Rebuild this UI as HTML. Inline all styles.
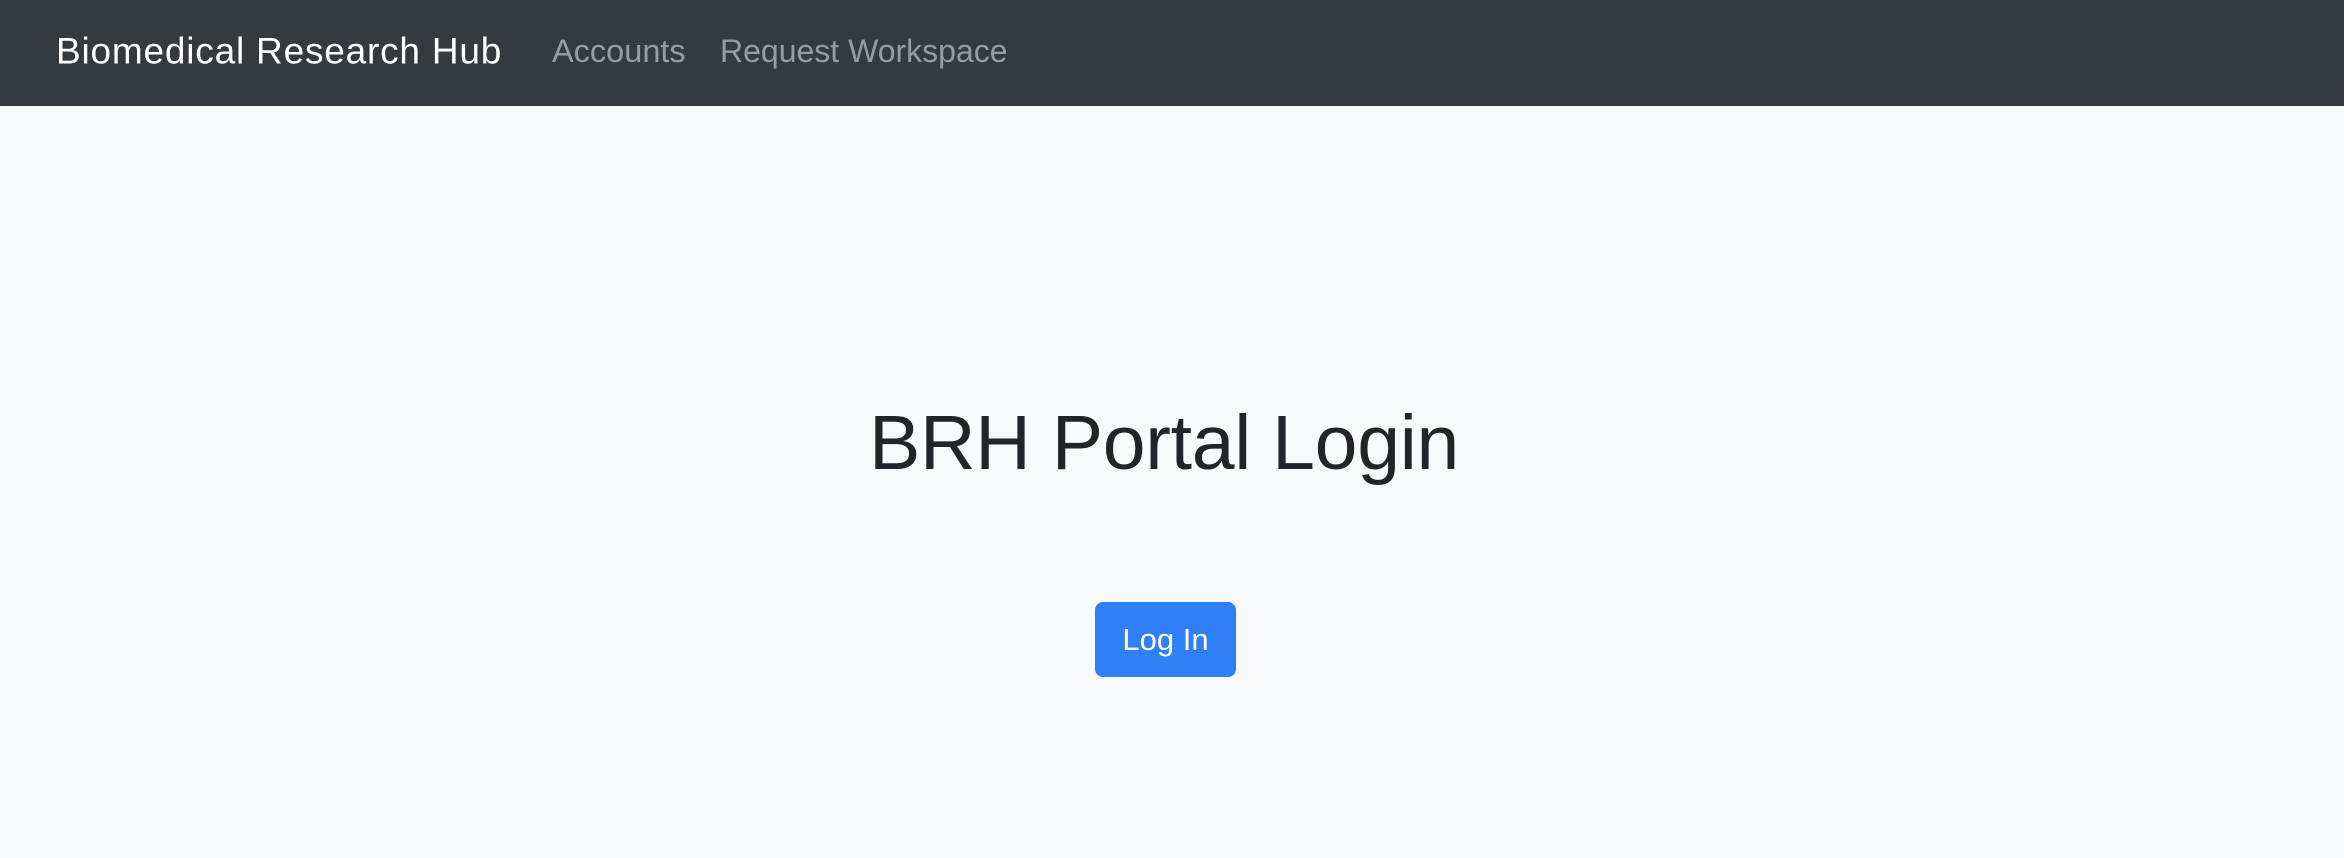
<!DOCTYPE html>
<html><head><meta charset="utf-8"><style>
html,body{margin:0;padding:0;width:2344px;height:858px;overflow:hidden;background:#f8f9fa;font-family:"Liberation Sans",sans-serif;}
.nav{position:absolute;left:0;top:0;width:2344px;height:106px;background:#343a40;}
.nav span{position:absolute;top:51px;transform:translateY(-50%);white-space:nowrap;line-height:1;}
.brand{left:56px;font-size:37px;color:#fff;letter-spacing:0.8px;}
.l1{left:552px;font-size:32.5px;color:#999c9f;}
.l2{left:720px;font-size:32px;color:#999c9f;}
h1{position:absolute;left:-8px;width:2344px;top:398px;margin:0;text-align:center;font-weight:normal;font-size:77px;line-height:90px;color:#212529;letter-spacing:-0.3px;}
.btn{position:absolute;left:1095px;top:602px;width:141px;height:75px;background:#2f7ff6;border-radius:8px;color:#fff;font-size:31px;line-height:75px;text-align:center;}
</style></head><body>
<div class="nav"><span class="brand">Biomedical Research Hub</span><span class="l1">Accounts</span><span class="l2">Request Workspace</span></div>
<h1>BRH Portal Login</h1>
<div class="btn">Log In</div>
</body></html>
